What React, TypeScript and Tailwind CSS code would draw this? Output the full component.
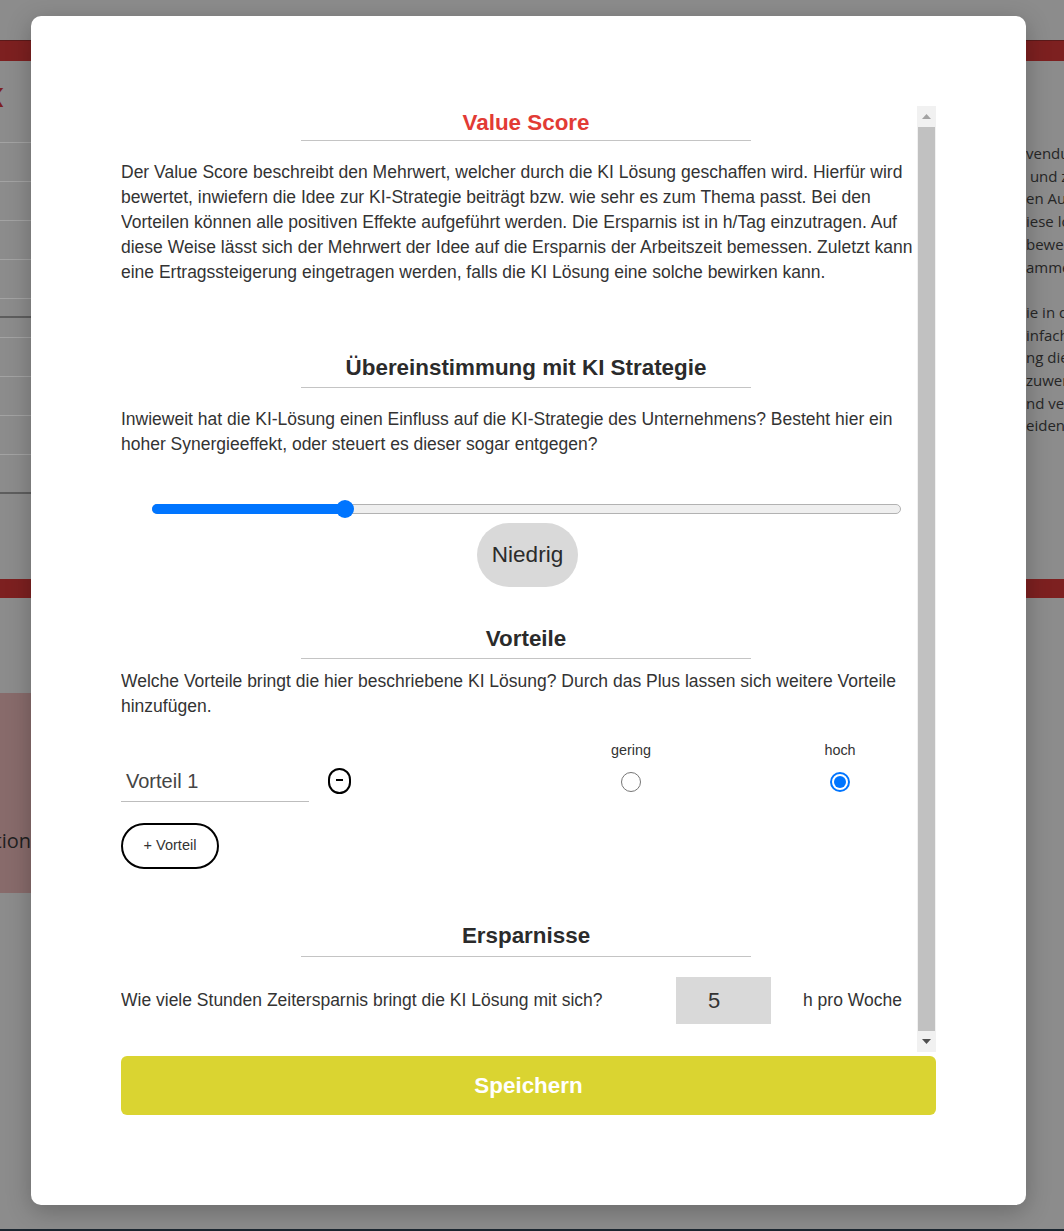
import React from 'react';

const rightLines1 = ['vendungen', ' und zwar', 'en Aufgaben', 'iese lokal', 'bewertet', 'ammen'];
const rightLines2 = ['ie in der', 'infach', 'ng die', 'zuwenden', 'nd verl', 'eiden,'];

function Heading({ children, red = false, gap = 5 }: { children: React.ReactNode; red?: boolean; gap?: number }) {
  return (
    <div
      className={`ml-[180px] w-[450px] border-b border-[#c4c4c4] text-center text-[22.4px] font-bold leading-[28px] ${red ? 'text-[#e23b35]' : 'text-[#2b2b2b]'}`}
      style={{ paddingBottom: gap }}
    >
      {children}
    </div>
  );
}

function Radio({ checked }: { checked?: boolean }) {
  if (checked) {
    return (
      <div className="w-[20px] h-[20px] rounded-full border-2 border-[#0075ff] flex items-center justify-center">
        <div className="w-[12px] h-[12px] rounded-full bg-[#0075ff]" />
      </div>
    );
  }
  return <div className="w-[20px] h-[20px] rounded-full border border-[#767676] bg-white" />;
}

export default function App() {
  return (
    <div className="relative w-full h-[1231px] overflow-hidden bg-[#8c8c8c] font-['Open_Sans',sans-serif]">
      {/* page behind the overlay */}
      <div className="flex flex-col h-full">
        <div className="h-[40px]" />
        <div className="h-[21px] bg-[#7d2020] border-t border-[#5a1a1a]" />
        <div className="flex h-[518px]">
          <div className="w-[31px] flex flex-col">
            <div className="h-[81px] relative overflow-hidden">
              <span className="absolute left-[-14px] top-[23px] text-[26px] font-bold text-[#7d2020] leading-none">K</span>
            </div>
            <div className="h-[39px] border-t border-[#a3a3a3]" />
            <div className="h-[39px] border-t border-[#a3a3a3]" />
            <div className="h-[39px] border-t border-[#a3a3a3]" />
            <div className="h-[39px] border-t border-[#a3a3a3]" />
            <div className="h-[18px] border-t border-[#a3a3a3]" />
            <div className="h-[21px] border-t-2 border-[#5e5e5e]" />
            <div className="h-[39px] border-t border-[#a3a3a3]" />
            <div className="h-[39px] border-t border-[#a3a3a3]" />
            <div className="h-[39px] border-t border-[#a3a3a3]" />
            <div className="h-[38px] border-t border-[#a3a3a3]" />
            <div className="flex-1 border-t-2 border-[#5e5e5e]" />
          </div>
          <div className="flex-1" />
          <div className="w-[38px] overflow-hidden pt-[81px] text-[15px] leading-[22.7px] text-[#262626] whitespace-pre">
            {rightLines1.map((l) => (
              <div key={l}>{l}</div>
            ))}
            <div className="h-[22.7px]" />
            {rightLines2.map((l) => (
              <div key={l}>{l}</div>
            ))}
          </div>
        </div>
        <div className="h-[19px] bg-[#7d2020]" />
        <div className="h-[95px]" />
        <div className="h-[200px] w-[80px] bg-[#886b6b] flex flex-col justify-end pb-[38px]">
          <div className="w-[31px] flex justify-end whitespace-nowrap">
            <span className="text-[20px] text-[#1f1f1f] leading-[28px]">Option</span>
          </div>
        </div>
        <div className="flex-1" />
        <div className="h-[2px] bg-[#1b2630]" />
      </div>

      {/* modal */}
      <div className="absolute left-[31px] top-[16px] w-[995px] h-[1189px] rounded-[10px] bg-white shadow-[0_6px_24px_rgba(0,0,0,0.25)] pt-[90px] px-[90px] flex flex-col font-['Liberation_Sans',Arial,sans-serif] text-[#333]">
        <div className="h-[946px] flex">
          <div className="w-[796px] overflow-hidden">
            <div className="mt-[3px]">
              <Heading red gap={3}>Value Score</Heading>
            </div>
            <p className="mt-[19px] text-[17.5px] leading-[25px]">
              Der Value Score beschreibt den Mehrwert, welcher durch die KI Lösung geschaffen wird. Hierfür wird bewertet, inwiefern die Idee zur KI-Strategie beiträgt bzw. wie sehr es zum Thema passt. Bei den Vorteilen können alle positiven Effekte aufgeführt werden. Die Ersparnis ist in h/Tag einzutragen. Auf diese Weise lässt sich der Mehrwert der Idee auf die Ersparnis der Arbeitszeit bemessen. Zuletzt kann eine Ertragssteigerung eingetragen werden, falls die KI Lösung eine solche bewirken kann.
            </p>

            <div className="mt-[69px]">
              <Heading>Übereinstimmung mit KI Strategie</Heading>
            </div>
            <p className="mt-[19px] text-[17.5px] leading-[25px]">
              Inwieweit hat die KI-Lösung einen Einfluss auf die KI-Strategie des Unternehmens? Besteht hier ein hoher Synergieeffekt, oder steuert es dieser sogar entgegen?
            </p>

            {/* slider */}
            <div className="relative ml-[31px] w-[749px] h-[18px] mt-[43px]">
              <div className="absolute left-0 right-0 top-[4px] h-[10px] rounded-full bg-[#efefef] border border-[#b2b2b2]" />
              <div className="absolute left-0 top-[4px] h-[10px] w-[193px] rounded-full bg-[#0075ff]" />
              <div className="absolute left-[184px] top-0 w-[18px] h-[18px] rounded-full bg-[#0075ff]" />
            </div>
            <div className="mt-[5px] ml-[356px] w-[101px] h-[64px] rounded-full bg-[#d9d9d9] flex items-center justify-center text-[22.5px] text-[#2b2b2b]">
              Niedrig
            </div>

            <div className="mt-[38px]">
              <Heading>Vorteile</Heading>
            </div>
            <p className="mt-[10px] text-[17.5px] leading-[25px]">
              Welche Vorteile bringt die hier beschriebene KI Lösung? Durch das Plus lassen sich weitere Vorteile hinzufügen.
            </p>

            <div className="mt-[21px] flex text-[14.4px] leading-[20px] text-[#333]">
              <div className="ml-[480px] w-[60px] text-center">gering</div>
              <div className="ml-[149px] w-[60px] text-center">hoch</div>
            </div>
            <div className="mt-[1px] flex items-center h-[41px]">
              <div className="w-[188px] h-[41px] border-b border-[#bdbdbd] flex items-center pl-[5px] text-[20px] text-[#444]">
                Vorteil 1
              </div>
              <div className="ml-[19px] mb-[2px] w-[23px] h-[26px] rounded-full border-2 border-black flex items-center justify-center">
                <div className="w-[7px] h-[2px] bg-black mb-[2px]" />
              </div>
              <div className="ml-[250px] w-[60px] flex justify-center">
                <Radio />
              </div>
              <div className="ml-[149px] w-[60px] flex justify-center">
                <Radio checked />
              </div>
            </div>
            <button className="mt-[21px] w-[98px] h-[46px] rounded-full border-2 border-black bg-white text-[14.5px] text-[#333]">
              + Vorteil
            </button>

            <div className="mt-[53px]">
              <Heading gap={6}>Ersparnisse</Heading>
            </div>
            <div className="mt-[20px] flex items-center h-[47px] text-[17.5px]">
              <div className="w-[555px]">Wie viele Stunden Zeitersparnis bringt die KI Lösung mit sich?</div>
              <div className="w-[95px] h-[47px] bg-[#d9d9d9] flex items-center pl-[32px] text-[22px] text-[#333]">5</div>
              <div className="ml-[32px]">h pro Woche</div>
            </div>
          </div>

          {/* scrollbar */}
          <div className="w-[19px] bg-[#f1f1f1] flex flex-col items-center">
            <div className="h-[21px] flex items-center justify-center">
              <svg width="9" height="5" viewBox="0 0 9 5">
                <path d="M0 5 L4.5 0 L9 5 Z" fill="#a3a3a3" />
              </svg>
            </div>
            <div className="flex-1 w-[17px] bg-[#c1c1c1]" />
            <div className="h-[21px] flex items-center justify-center">
              <svg width="9" height="5" viewBox="0 0 9 5">
                <path d="M0 0 L4.5 5 L9 0 Z" fill="#505050" />
              </svg>
            </div>
          </div>
        </div>

        <button className="mt-[4px] h-[59px] w-full rounded-[6px] bg-[#dad431] text-white text-[22.4px] font-bold">
          Speichern
        </button>
      </div>
    </div>
  );
}
